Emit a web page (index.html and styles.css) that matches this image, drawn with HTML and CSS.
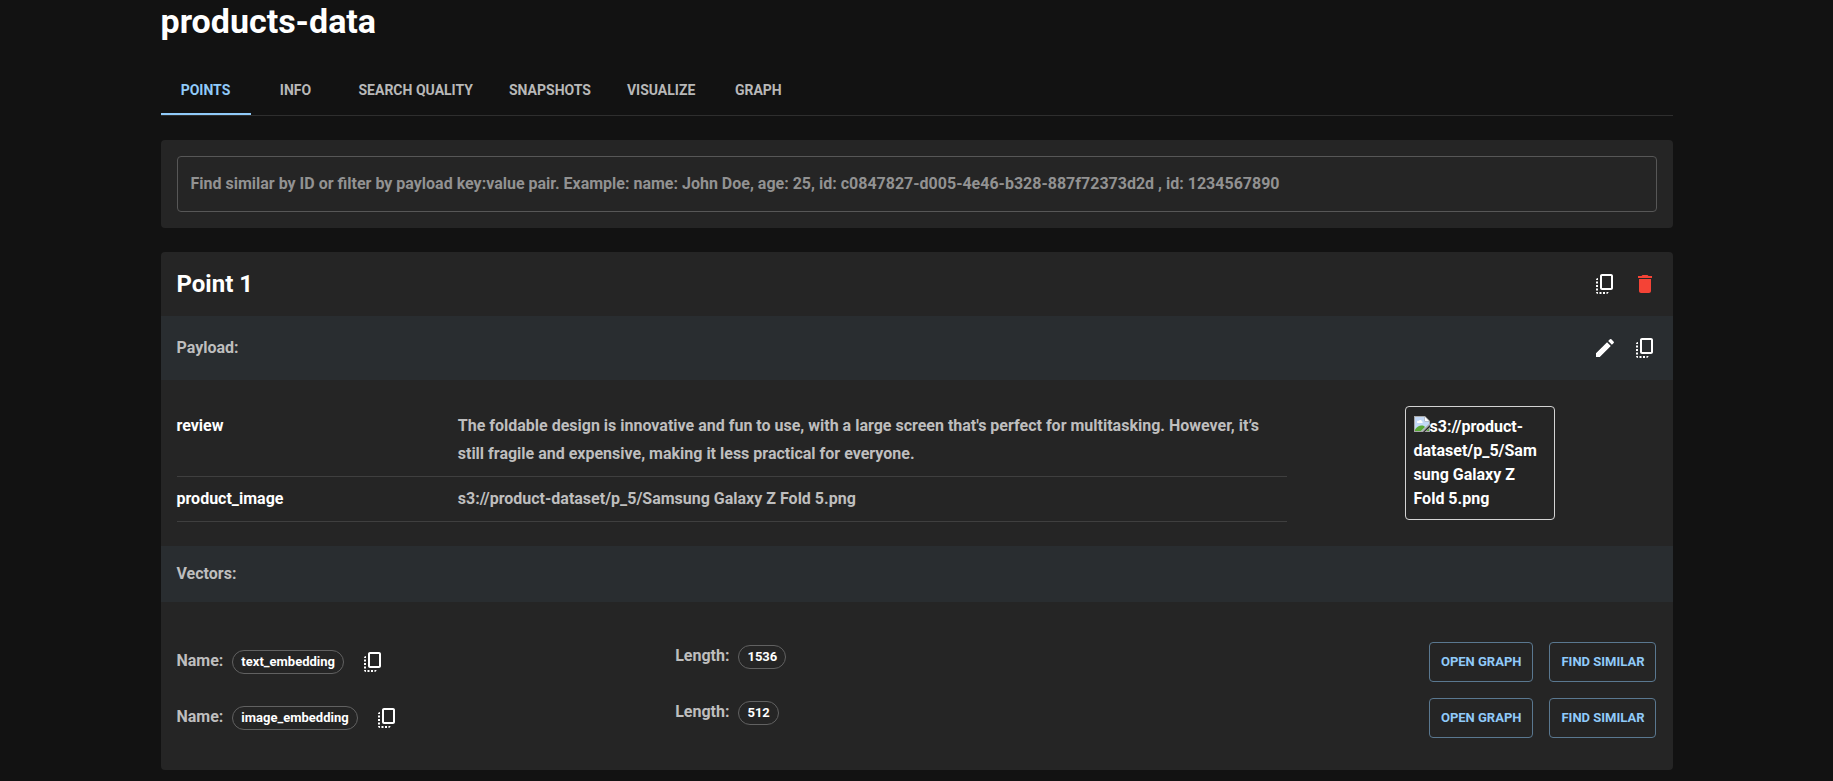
FILE: index.html
```html
<!DOCTYPE html>
<html lang="en">
<head>
<meta charset="utf-8">
<meta name="viewport" content="width=device-width, initial-scale=1">
<title>products-data</title>
<link rel="stylesheet" href="styles.css">
</head>
<body>
<svg class="sprite" aria-hidden="true">
  <symbol id="copy" viewBox="0 0 24 24"><path d="M18 2H9c-1.1 0-2 .9-2 2v12c0 1.1.9 2 2 2h9c1.1 0 2-.9 2-2V4c0-1.1-.9-2-2-2zm0 14H9V4h9v12zM3 15v-2h2v2H3zm0-5.500h2v2H3v-2zM10 20h2v2h-2v-2zm-7-1.500v-2h2v2H3zM5 22c-1.100 0-2-.9-2-2h2v2zm3.500 0h-2v-2h2v2zm5 0v-2h2c0 1.100-.9 2-2 2zM5 6v2H3c0-1.100.9-2 2-2z"/></symbol>
  <symbol id="delete" viewBox="0 0 24 24"><path d="M6 19c0 1.100.9 2 2 2h8c1.100 0 2-.9 2-2V7H6v12zM19 4h-3.500l-1-1h-5l-1 1H5v2h14V4z"/></symbol>
  <symbol id="edit" viewBox="0 0 24 24"><path d="M3 17.250V21h3.750L17.810 9.940l-3.750-3.750L3 17.250zM20.710 7.040c.39-.39.39-1.020 0-1.410l-2.340-2.340a.9959.9959 0 0 0-1.410 0l-1.830 1.830 3.750 3.750 1.830-1.830z"/></symbol>
</svg>
<main class="container">
  <h1 class="title">products-data</h1>
  <div class="tabs" role="tablist">
    <button class="tab tab-active" role="tab" aria-selected="true">POINTS</button>
    <button class="tab" role="tab">INFO</button>
    <button class="tab" role="tab">SEARCH QUALITY</button>
    <button class="tab" role="tab">SNAPSHOTS</button>
    <button class="tab" role="tab">VISUALIZE</button>
    <button class="tab" role="tab">GRAPH</button>
  </div>

  <section class="card search">
    <input class="search-input" type="text" aria-label="Find similar points" placeholder="Find similar by ID or filter by payload key:value pair. Example: name: John Doe, age: 25, id: c0847827-d005-4e46-b328-887f72373d2d , id: 1234567890">
  </section>

  <section class="card">
    <header class="bar bar-icons">
      <h2 class="point-title">Point 1</h2>
      <div class="actions">
        <button class="icon-button" aria-label="Copy point"><svg class="icon"><use href="#copy"/></svg></button>
        <button class="icon-button icon-danger" aria-label="Delete point"><svg class="icon"><use href="#delete"/></svg></button>
      </div>
    </header>
    <div class="bar bar-icons bar-tinted">
      <h3 class="label">Payload:</h3>
      <div class="actions">
        <button class="icon-button" aria-label="Edit payload"><svg class="icon"><use href="#edit"/></svg></button>
        <button class="icon-button" aria-label="Copy payload"><svg class="icon"><use href="#copy"/></svg></button>
      </div>
    </div>
    <div class="payload">
      <dl class="fields">
        <div class="field">
          <dt class="key">review</dt>
          <dd class="value">The foldable design is innovative and fun to use, with a large screen that's perfect for multitasking. However, it’s still fragile and expensive, making it less practical for everyone.</dd>
        </div>
        <div class="field">
          <dt class="key">product_image</dt>
          <dd class="value">s3://product-dataset/p_5/Samsung Galaxy Z Fold 5.png</dd>
        </div>
      </dl>
      <div class="preview">
        <div class="thumb"><svg class="broken" viewBox="0 0 16 16" aria-hidden="true"><path d="M0 0h11l5 5v4l-7 7H0z" fill="#a9a9a9"/><path d="M1 1h9.500v4.500H15V8l-7.500 7H1z" fill="#c3d9f7"/><path d="M3 6c0-1 1-1.500 1.700-1C5.500 3.500 7.600 3.800 7.800 5.200 9 5.200 9 7 8 7H4C3.300 7 3 6.600 3 6z" fill="#fff"/><path d="M1 15v-1.500C3 11 5 9.500 7.500 9.500c1.500 0 2.500.4 3.500 1.400L7 15z" fill="#58a936"/><path d="M11 1l4 4h-4z" fill="#fff"/><path d="M11 15.500L16 11v5h-5.500z" fill="#a9a9a9"/><path d="M12.500 15L15 12.500V15z" fill="#58a936"/></svg>s3://product-dataset/p_5/Samsung Galaxy Z Fold 5.png</div>
      </div>
    </div>
    <div class="bar bar-tinted">
      <h3 class="label">Vectors:</h3>
    </div>
    <div class="vectors">
      <div class="vector">
        <div class="label">Name:<span class="chip">text_embedding</span><button class="icon-button vector-copy" aria-label="Copy text_embedding"><svg class="icon"><use href="#copy"/></svg></button></div>
        <div class="label">Length:<span class="chip">1536</span></div>
        <div class="vector-actions">
          <button class="outlined">OPEN GRAPH</button>
          <button class="outlined">FIND SIMILAR</button>
        </div>
      </div>
      <div class="vector">
        <div class="label">Name:<span class="chip">image_embedding</span><button class="icon-button vector-copy" aria-label="Copy image_embedding"><svg class="icon"><use href="#copy"/></svg></button></div>
        <div class="label">Length:<span class="chip">512</span></div>
        <div class="vector-actions">
          <button class="outlined">OPEN GRAPH</button>
          <button class="outlined">FIND SIMILAR</button>
        </div>
      </div>
    </div>
  </section>
</main>
</body>
</html>
```
FILE: styles.css
```css
*, *::before, *::after { box-sizing: border-box; }
body {
  margin: 0;
  background: #121212;
  color: #fff;
  font: 700 16px/24px Roboto, sans-serif;
}
h1, h2, h3, dl, dd { margin: 0; font-weight: 700; }
button, input { font: inherit; color: inherit; }
button { border: 0; background: none; cursor: pointer; }
.sprite { display: none; }

.container { max-width: 1536px; margin: 0 auto; padding: 0 12px 8px; }
.title { font-size: 34px; line-height: 42px; }

.tabs { display: flex; margin: 24px 0; border-bottom: 1px solid #2e2e2e; }
.tab {
  min-width: 90px;
  height: 49px;
  padding: 0 18px;
  color: #b8b8b8;
  font-size: 14px;
  border-bottom: 2px solid transparent;
}
.tab-active { color: #90caf9; border-bottom-color: #90caf9; }

.card { margin-bottom: 24px; background: #252525; border-radius: 4px; overflow: hidden; }
.card:last-child { margin-bottom: 0; }
.search { padding: 16px; }
.search-input {
  display: block;
  width: 100%;
  height: 56px;
  padding: 0 13px 2px;
  background: none;
  border: 1px solid #575757;
  border-radius: 4px;
}
.search-input::placeholder { color: #929292; opacity: 1; }

.bar { display: flex; align-items: center; justify-content: space-between; padding: 14px 16px; }
.bar-icons { padding: 12px 8px 12px 16px; }
.bar-tinted { background: #292d30; }
.point-title { font-size: 24px; line-height: 32px; }
.label { color: #bebebe; font-size: 16px; line-height: 28px; }
.actions { display: flex; }
.icon-button { width: 40px; height: 40px; padding: 8px; color: #fff; vertical-align: middle; }
.icon-danger { color: #f44336; }
.icon { display: block; width: 24px; height: 24px; fill: currentColor; }

.payload { display: grid; grid-template-columns: 3fr 1fr; padding: 24px 16px; }
.field {
  display: grid;
  grid-template-columns: 1fr 3fr;
  column-gap: 5px;
  padding: 8px 0;
  border-bottom: 1px solid #3f3f3f;
  line-height: 28px;
}
.value { color: #bebebe; }
.preview { display: flex; align-items: center; justify-content: center; padding-left: 16px; }
.thumb {
  width: 150px;
  padding: 8px 12px 8px 8px;
  border: 1px solid #d3d3d3;
  border-radius: 4px;
  overflow-wrap: anywhere;
}
.broken { width: 16px; height: 16px; vertical-align: baseline; }

.vectors { display: grid; gap: 16px; padding: 40px 16px 32px; }
.vector { display: grid; grid-template-columns: repeat(3, 1fr); column-gap: 16px; }
.chip {
  display: inline-block;
  margin-left: 9px;
  padding: 0 8px;
  border: 1px solid #616161;
  border-radius: 12px;
  color: #fff;
  font-size: 13px;
  line-height: 22px;
  vertical-align: middle;
}
.vector-copy { margin-left: 9px; }
.vector-actions { display: flex; justify-content: flex-end; gap: 16px; }
.outlined {
  height: 40px;
  padding: 0 11px;
  color: #90caf9;
  border: 1px solid #5a7890;
  border-radius: 4px;
  font-size: 13px;
}
```
